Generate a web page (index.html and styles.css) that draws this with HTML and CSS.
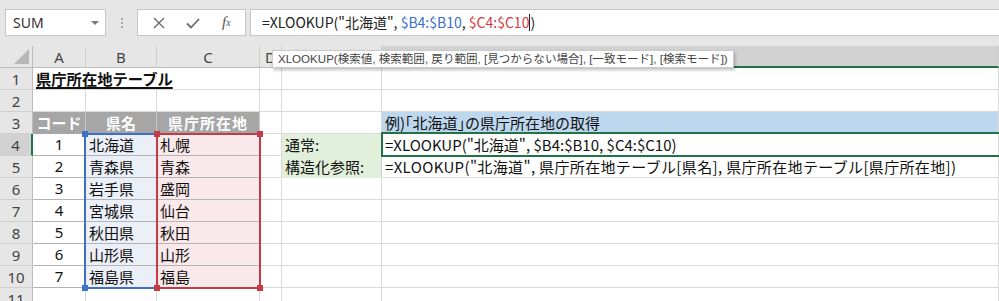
FILE: index.html
```html
<!DOCTYPE html>
<html lang="ja">
<head>
  <meta charset="UTF-8" />
  <title>XLOOKUP - 県庁所在地テーブル</title>
  <link rel="stylesheet" href="styles.css">
</head>
<body>
  <div class="formula-bar">
    <div class="name-box">
      <span>SUM</span>
      <span class="drop"></span>
    </div>
    <div class="grip"><i></i><i></i><i></i></div>
    <div class="fx-buttons">
      <svg class="btn" width="14" height="14" viewBox="0 0 14 14"><path d="M2 2L12 12M12 2L2 12" stroke="#6b6b6b" stroke-width="1.4" fill="none"/></svg>
      <svg class="btn" width="16" height="14" viewBox="0 0 16 14"><path d="M2 7.5L6 11.5L14 3" stroke="#6b6b6b" stroke-width="1.8" fill="none"/></svg>
      <span class="fx">f<sub>x</sub></span>
    </div>
    <div class="formula-input">
      =XLOOKUP("北海道", <span class="ref-b">$B4:$B10</span>, <span class="ref-c">$C4:$C10</span><span class="caret"></span>)
    </div>
  </div>

  <div class="sheet">
    <div class="grid">
      <div class="corner"><span class="tri"></span></div>
      <div class="ch">A</div>
      <div class="ch">B</div>
      <div class="ch">C</div>
      <div class="ch">D</div>
      <div class="ch">E</div>
      <div class="ch ch-sel"></div>

      <div class="rh">1</div>
      <div class="c title">県庁所在地テーブル</div>
      <div class="c"></div>
      <div class="c"></div>
      <div class="c"></div>

      <div class="rh">2</div>
      <div class="c"></div><div class="c"></div><div class="c"></div><div class="c"></div><div class="c"></div><div class="c"></div>

      <div class="rh">3</div>
      <div class="c th">コード</div>
      <div class="c th">県名</div>
      <div class="c th wide">県庁所在地</div>
      <div class="c"></div>
      <div class="c"></div>
      <div class="c note">例)「北海道」の県庁所在地の取得</div>

      <div class="rh rh-sel">4</div>
      <div class="c num tb">1</div><div class="c pref tb">北海道</div><div class="c cap tb">札幌</div>
      <div class="c"></div><div class="c label">通常:</div>
      <div class="c">=XLOOKUP("北海道", $B4:$B10, $C4:$C10)</div>

      <div class="rh">5</div>
      <div class="c num tb">2</div><div class="c pref tb">青森県</div><div class="c cap tb">青森</div>
      <div class="c"></div><div class="c label">構造化参照:</div>
      <div class="c spaced">=XLOOKUP("北海道", 県庁所在地テーブル[県名], 県庁所在地テーブル[県庁所在地])</div>

      <div class="rh">6</div>
      <div class="c num tb">3</div><div class="c pref tb">岩手県</div><div class="c cap tb">盛岡</div>
      <div class="c"></div><div class="c"></div><div class="c"></div>

      <div class="rh">7</div>
      <div class="c num tb">4</div><div class="c pref tb">宮城県</div><div class="c cap tb">仙台</div>
      <div class="c"></div><div class="c"></div><div class="c"></div>

      <div class="rh">8</div>
      <div class="c num tb">5</div><div class="c pref tb">秋田県</div><div class="c cap tb">秋田</div>
      <div class="c"></div><div class="c"></div><div class="c"></div>

      <div class="rh">9</div>
      <div class="c num tb">6</div><div class="c pref tb">山形県</div><div class="c cap tb">山形</div>
      <div class="c"></div><div class="c"></div><div class="c"></div>

      <div class="rh">10</div>
      <div class="c num tb">7</div><div class="c pref tb">福島県</div><div class="c cap tb">福島</div>
      <div class="c"></div><div class="c"></div><div class="c"></div>

      <div class="rh">11</div>
      <div class="c"></div><div class="c"></div><div class="c"></div><div class="c"></div><div class="c"></div><div class="c"></div>
    </div>

    <!-- overlays: reference ranges, active cell, tooltip -->
    <div class="range range-b">
      <span class="h tl"></span><span class="h bl"></span>
    </div>
    <div class="range range-c">
      <span class="h tl"></span><span class="h tr"></span><span class="h bl"></span><span class="h br"></span>
    </div>
    <div class="active-cell"></div>
    <div class="tip">XLOOKUP(検索値, 検索範囲, 戻り範囲, [見つからない場合], [一致モード], [検索モード])</div>
  </div>
</body>
</html>
```

FILE: styles.css
```css
body {
  margin: 0;
  width: 999px;
  height: 301px;
  overflow: hidden;
  background: #e6e6e6;
  font-family: 'Noto Sans', 'Noto Sans CJK JP', sans-serif;
  color: #222;
}

/* formula bar */
.formula-bar {
  height: 46px;
  box-sizing: border-box;
  padding: 9px 0 0 5px;
  display: flex;
  align-items: flex-start;
}
.name-box {
  width: 101px;
  height: 27px;
  box-sizing: border-box;
  background: #fff;
  border: 1px solid #c6c6c6;
  display: flex;
  align-items: center;
  justify-content: space-between;
  padding: 0 6px 0 7px;
  font-size: 14px;
  color: #333;
}
.drop {
  width: 0;
  height: 0;
  border-left: 4px solid transparent;
  border-right: 4px solid transparent;
  border-top: 4px solid #7a7a7a;
}
.grip {
  width: 31px;
  height: 27px;
  display: flex;
  flex-direction: column;
  align-items: center;
  justify-content: center;
  gap: 2px;
}
.grip i {
  width: 2px;
  height: 2px;
  background: #a8a8a8;
}
.fx-buttons {
  width: 109px;
  height: 27px;
  box-sizing: border-box;
  background: #fff;
  border: 1px solid #c6c6c6;
  display: flex;
  align-items: center;
  padding-left: 14px;
  gap: 19px;
  margin-right: 4px;
}
.fx {
  font-family: 'Liberation Serif', serif;
  font-style: italic;
  font-size: 15px;
  color: #555;
  margin-left: 2px;
}
.fx sub {
  font-size: 10px;
  vertical-align: 1px;
}
.formula-input {
  flex: 1;
  height: 27px;
  box-sizing: border-box;
  background: #fff;
  border: 1px solid #c6c6c6;
  border-right: none;
  padding-left: 11px;
  font-family: 'Noto Sans CJK JP', sans-serif;
  font-size: 14px;
  line-height: 25px;
  color: #222;
  white-space: nowrap;
}
.ref-b { color: #3b6fc8; }
.ref-c { color: #d23a44; }
.caret {
  display: inline-block;
  width: 1px;
  height: 17px;
  background: #222;
  vertical-align: -3px;
}

/* sheet grid */
.sheet {
  position: relative;
}
.grid {
  display: grid;
  grid-template-columns: 33px 53px 71px 103px 22px 100px 617px;
  grid-template-rows: 22px;
  grid-auto-rows: 22px;
  background: #fff;
}
.corner, .ch, .rh {
  background: #e6e6e6;
  box-sizing: border-box;
  font-size: 15px;
  color: #444;
  display: flex;
  align-items: center;
  justify-content: center;
}
.corner {
  border-right: 1px solid #bdbdbd;
  border-bottom: 1px solid #bdbdbd;
  position: relative;
}
.tri {
  position: absolute;
  right: 3px;
  bottom: 3px;
  width: 0;
  height: 0;
  border-left: 15px solid transparent;
  border-bottom: 15px solid #b8b8b8;
}
.ch {
  border-right: 1px solid #cfcfcf;
  border-bottom: 1px solid #bdbdbd;
}
.ch-sel {
  background: #d2d2d2;
  border-bottom: 2px solid #217346;
}
.rh {
  border-right: 1px solid #bdbdbd;
  border-bottom: 1px solid #cfcfcf;
}
.rh-sel {
  background: #d2d2d2;
  border-right: 2px solid #217346;
}
.c {
  box-sizing: border-box;
  border-right: 1px solid #d9d9d9;
  border-bottom: 1px solid #d9d9d9;
  padding: 0 3px;
  font-family: 'Noto Sans CJK JP', sans-serif;
  font-size: 15px;
  line-height: 21px;
  color: #111;
  white-space: nowrap;
}
.spaced { letter-spacing: 0.35px; }
.title {
  grid-column: span 3;
  font-weight: bold;
  font-size: 15.3px;
  text-decoration: underline;
  text-decoration-thickness: 2px;
  text-underline-offset: 2px;
}
.th {
  background: #a6a6a6;
  color: #fff;
  font-weight: bold;
  text-align: center;
  border-right-color: #c8c8c8;
  border-bottom-color: #a6a6a6;
}
.wide { letter-spacing: 1px; }
.note {
  background: #bdd7ee;
  border-bottom-color: #bdd7ee;
  font-feature-settings: "halt";
}
.tb { border-bottom-color: #b4b4b4; }
.num {
  text-align: center;
  font-family: 'Noto Sans', sans-serif;
}
.pref { background: #ebeff8; }
.cap { background: #f9e9ea; }
.label { background: #e2efda; border-bottom-color: #e2efda; border-right-color: #d0d0d0; }

/* overlays */
.range {
  position: absolute;
  top: 87px;
  height: 156px;
  box-sizing: border-box;
  border: 2px solid;
}
.range-b { left: 84px; width: 74px; border-color: #3f70c6; }
.range-c { left: 156px; width: 105px; border-color: #c43a45; }
.h {
  position: absolute;
  width: 6px;
  height: 6px;
}
.range-b .h { background: #3f70c6; }
.range-c .h { background: #c43a45; }
.tl { left: -4px; top: -4px; }
.tr { right: -4px; top: -4px; }
.bl { left: -4px; bottom: -4px; }
.br { right: -4px; bottom: -4px; }
.active-cell {
  position: absolute;
  left: 381px;
  top: 86px;
  width: 640px;
  height: 25px;
  box-sizing: border-box;
  border: 2px solid #217346;
}
.tip {
  position: absolute;
  left: 272px;
  top: 4px;
  width: 462px;
  height: 18px;
  box-sizing: border-box;
  background: #fff;
  border: 1px solid #cacaca;
  box-shadow: 1px 2px 3px rgba(0, 0, 0, 0.25);
  padding-left: 5px;
  font-family: 'Liberation Sans', 'Noto Sans CJK JP', sans-serif;
  font-size: 11.55px;
  line-height: 16px;
  color: #444;
  white-space: nowrap;
}
```
